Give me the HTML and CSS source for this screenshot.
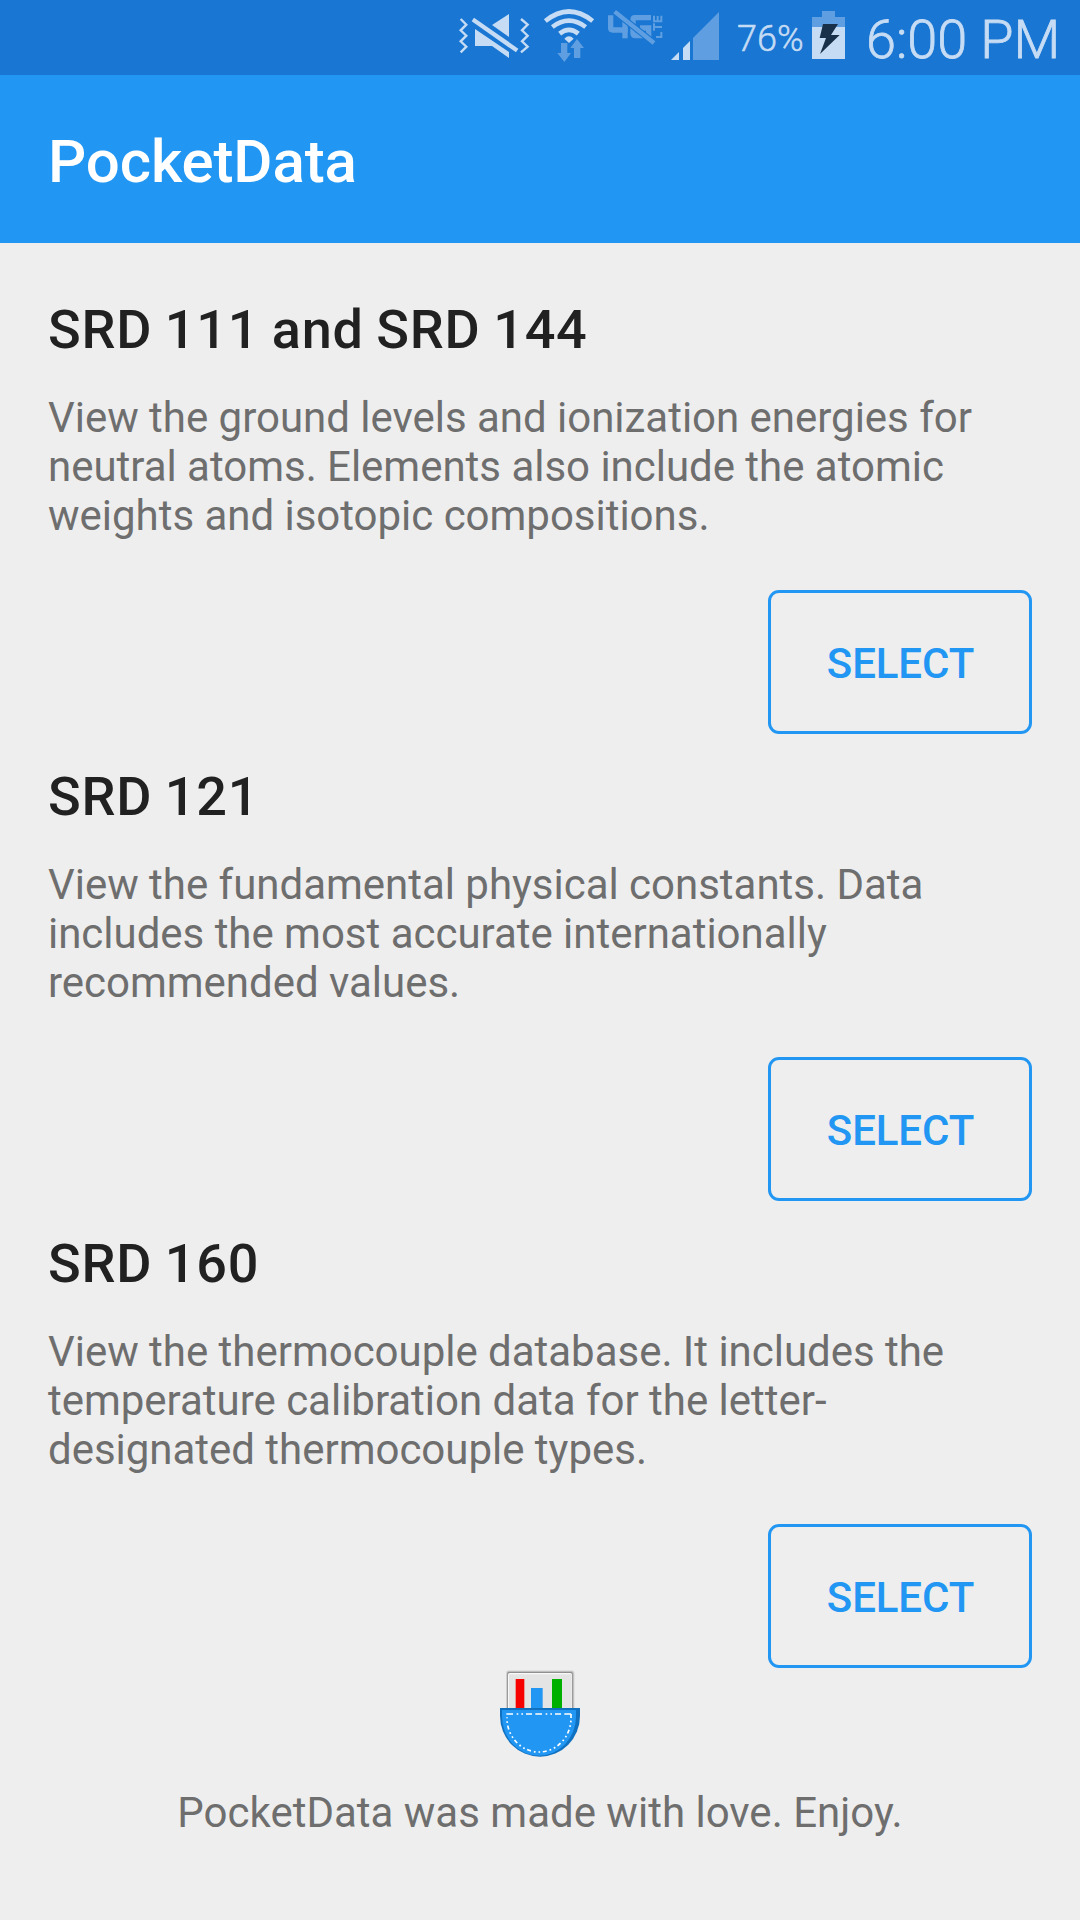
FILE: index.html
```html
<!DOCTYPE html>
<html lang="en">
<head>
    <meta charset="UTF-8">
    <meta name="viewport" content="width=device-width, initial-scale=1.0">
    <title>PocketData</title>
    <link rel="stylesheet" href="styles.css">
</head>
<body>
    <div class="status-bar">
        <!-- Vibrate / muted -->
        <svg class="icon-mute" viewBox="45 0 234 225" width="78" height="75">
            <g fill="none" stroke="#c6dcf4" stroke-width="7">
                <path d="M62 57L79 74L62 91L79 107L62 124L79 140L62 157"/>
                <path d="M243 57L263 74L246 91L263 107L246 124L263 140L243 157"/>
            </g>
            <g fill="#c6dcf4">
                <path d="M207 42V111L156 75Z"/>
                <path d="M105 87L207 156V174L156 138H105Z"/>
                <path d="M102 53L235 146L228 157L95 64Z"/>
            </g>
        </svg>

        <!-- Wifi -->
        <svg class="icon-wifi" viewBox="306 0 162 225" width="54" height="75">
            <g fill="none" stroke="#c6dcf4" stroke-width="14">
                <path d="M316 63Q387 6 458 63"/>
                <path d="M337 81Q387 43 437 81"/>
                <path d="M359 101Q387 78 415 101"/>
            </g>
            <path d="M373 116Q387 102 401 116L387 129Z" fill="#c6dcf4"/>
            <path d="M363 129H382V159H393L373 186L352 159H363Z" fill="#5f9fe1"/>
            <path d="M402 174V144H391L411 117L432 144H421V174Z" fill="#5f9fe1"/>
        </svg>

        <!-- 4G LTE off -->
        <svg class="icon-lte" viewBox="15 0 180 225" width="60" height="75">
            <g fill="none" stroke="#5f9fe1" stroke-width="16">
                <path d="M32 46V84Q32 90 38 90H83"/>
                <path d="M75 56V115"/>
                <path d="M153 53H104Q99 53 99 60V100Q99 107 106 107H142"/>
                <path d="M120 84H146V112"/>
            </g>
            <path d="M38 30L170 135" stroke="#1976d2" stroke-width="20"/>
            <path d="M44 35L162 129" stroke="#5f9fe1" stroke-width="13"/>
            <g fill="none" stroke="#5f9fe1" stroke-width="6">
                <path d="M162 47V64H184V47M173 48V64"/>
                <path d="M162 70V92M162 81H186"/>
                <path d="M168 111H184V96"/>
            </g>
        </svg>

        <!-- Signal strength -->
        <svg class="icon-signal" viewBox="210 0 150 225" width="50" height="75">
            <path d="M213 180L237 156V180Z" fill="#c6dcf4"/>
            <path d="M249 180V144L270 123V180Z" fill="#c6dcf4"/>
            <path d="M279 180V114L357 36V180Z" fill="#5f9fe1"/>
        </svg>

        <span class="battery-level">76%</span>

        <!-- Battery charging -->
        <svg class="icon-battery" viewBox="276 0 99 225" width="33" height="75">
            <path d="M276 51H306V33H345V51H375V81H276Z" fill="#5f9fe1"/>
            <path d="M276 81H375V177H276Z" fill="#c6dcf4"/>
            <path d="M309 72H354L333 105H359L300 162L318 114H299Z" fill="#18304a"/>
        </svg>

        <span class="clock">6:00 PM</span>
    </div>

    <header class="app-bar">
        <h1>PocketData</h1>
    </header>

    <main class="content">
        <section class="database">
            <h2>SRD 111 and SRD 144</h2>
            <p>View the ground levels and ionization energies for neutral atoms. Elements also include the atomic weights and isotopic compositions.</p>
            <button class="select-btn">SELECT</button>
        </section>

        <section class="database">
            <h2>SRD 121</h2>
            <p>View the fundamental physical constants. Data includes the most accurate internationally recommended values.</p>
            <button class="select-btn">SELECT</button>
        </section>

        <section class="database">
            <h2>SRD 160</h2>
            <p>View the thermocouple database. It includes the temperature calibration data for the letter-designated thermocouple types.</p>
            <button class="select-btn">SELECT</button>
        </section>
    </main>

    <footer class="footer">
        <!-- Pocket logo -->
        <svg class="logo" viewBox="45 39 270 270" width="90" height="90">
            <rect x="78" y="46" width="206" height="120" rx="8" fill="#dcdcdc"/>
            <rect x="80" y="49" width="201" height="120" rx="7" fill="#b4b4b4"/>
            <rect x="82" y="51" width="196" height="120" rx="6" fill="#8f8f8f"/>
            <rect x="84" y="54" width="192" height="120" rx="5" fill="#f8f8f8"/>
            <rect x="87" y="58" width="188" height="120" rx="3" fill="#e4e4e4"/>
            <rect x="107" y="72" width="26" height="90" fill="#f60000"/>
            <rect x="153" y="99" width="35" height="63" fill="#2196f3"/>
            <rect x="216" y="72" width="30" height="90" fill="#00b000"/>
            <path d="M60 159H300V183A120 122 0 0 1 60 183Z" fill="#1171c1"/>
            <path d="M66 165H288V185A111 117 0 0 1 66 185Z" fill="#2196f3"/>
            <g fill="none" stroke="#fff" stroke-width="5">
                <path d="M79 177H275" stroke-dasharray="20 11 5 9 5 9 18 10"/>
                <path d="M273 177V190A96 101 0 0 1 81 190V187" stroke-dasharray="12 8 5 9 5 9"/>
            </g>
        </svg>
        <p>PocketData was made with love. Enjoy.</p>
    </footer>
</body>
</html>
```
FILE: styles.css
```css
* {
    margin: 0;
    padding: 0;
    box-sizing: border-box;
}

body {
    font-family: Roboto, sans-serif;
    background-color: #eeeeee;
    color: #6e6e6e;
}

.status-bar {
    display: flex;
    justify-content: flex-end;
    height: 75px;
    padding-right: 22px;
    background-color: #1976d2;
    color: #c6dcf4;
    white-space: nowrap;
}

.status-bar svg {
    flex-shrink: 0;
}

.icon-wifi {
    margin-left: 9px;
}

.icon-lte {
    margin-left: 9px;
}

.icon-signal {
    margin-left: 5px;
}

.battery-level {
    width: 92px;
    padding-left: 17px;
    font-size: 36px;
    font-weight: 300;
    line-height: 79px;
    -webkit-text-stroke: 0.5px #c6dcf4;
}

.clock {
    width: 213px;
    padding-left: 21px;
    font-size: 54px;
    font-weight: 300;
    line-height: 80px;
    -webkit-text-stroke: 0.8px #c6dcf4;
}

.app-bar {
    display: flex;
    align-items: center;
    height: 168px;
    padding: 4px 48px 0;
    background-color: #2196f3;
}

.app-bar h1 {
    color: #fff;
    font-size: 60px;
    font-weight: 500;
    letter-spacing: -0.12px;
}

.content {
    display: flex;
    flex-direction: column;
    gap: 31px;
    padding: 55px 48px 0;
}

.database {
    display: flex;
    flex-direction: column;
}

.database h2 {
    color: #212121;
    font-size: 54px;
    font-weight: 500;
    letter-spacing: 0.75px;
    word-spacing: -1.5px;
    line-height: 64px;
    margin-bottom: 31px;
}

.database p {
    font-size: 42px;
    letter-spacing: -0.02px;
    line-height: 49px;
    margin-bottom: 50px;
}

.select-btn {
    align-self: flex-end;
    width: 264px;
    height: 144px;
    padding: 2px 0 0 1px;
    border: 3px solid #2196f3;
    border-radius: 11px;
    background: none;
    color: #2196f3;
    font-family: inherit;
    font-size: 42px;
    font-weight: 500;
    letter-spacing: -0.1px;
}

.footer {
    display: flex;
    flex-direction: column;
    align-items: center;
}

.footer p {
    margin-top: 30px;
    font-size: 42px;
    line-height: 49px;
}
```
